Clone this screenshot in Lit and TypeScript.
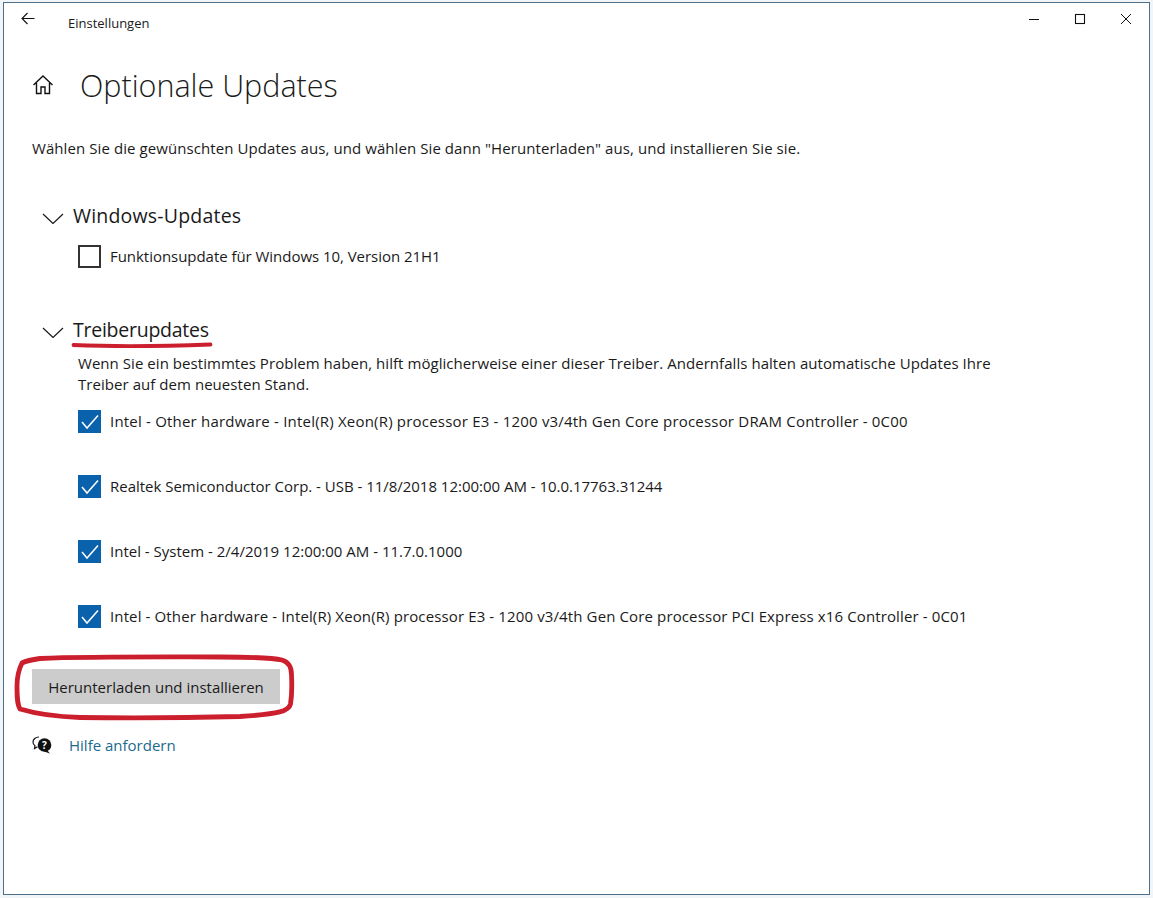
import { LitElement, html, css, svg } from "lit";
import { customElement } from "lit/decorators.js";

const chevron = html`<svg class="chev" width="22" height="12" viewBox="0 0 22 12"><path d="M1 2l10 9.500L21 2" fill="none" stroke="#1a1a1a" stroke-width="1.200"/></svg>`;
const check = html`<svg width="23" height="23" viewBox="0 0 23 23"><path d="M4 12l5 6L20 5.500" fill="none" stroke="#fff" stroke-width="1.500"/></svg>`;

const drivers = [
  { text: "Intel - Other hardware - Intel(R) Xeon(R) processor E3 - 1200 v3/4th Gen Core processor DRAM Controller - 0C00", ls: 0.2 },
  { text: "Realtek Semiconductor Corp. - USB - 11/8/2018 12:00:00 AM - 10.0.17763.31244", ls: -0.02 },
  { text: "Intel - System - 2/4/2019 12:00:00 AM - 11.7.0.1000", ls: 0 },
  { text: "Intel - Other hardware - Intel(R) Xeon(R) processor E3 - 1200 v3/4th Gen Core processor PCI Express x16 Controller - 0C01", ls: 0.124 },
];

@customElement("app-root")
export class AppRoot extends LitElement {
  static styles = css`
    :host {
      display: block;
      width: 1153px;
      height: 898px;
      box-sizing: border-box;
      padding: 2px 3px 3px 3px;
      background: #f2f5f7;
      font-family: "Open Sans", "Noto Sans", sans-serif;
      color: #1a1a1a;
      position: relative;
      overflow: hidden;
    }
    .window {
      height: 100%;
      box-sizing: border-box;
      background: #fff;
      border: 1px solid #4d6f8a;
      display: flex;
      flex-direction: column;
    }
    .titlebar {
      display: flex;
      align-items: flex-start;
      height: 43px;
      flex: none;
    }
    .back { margin: 9px 0 0 17px; width: 14px; height: 13px; display: block; }
    .app { margin: 12px 0 0 33px; font-size: 13px; line-height: 17px; flex: 1; }
    .controls { display: flex; }
    .ctl { width: 46px; height: 32px; display: flex; align-items: center; justify-content: center; }
    .main { padding-left: 28px; display: flex; flex-direction: column; }
    .head { display: flex; align-items: center; height: 44px; margin-top: 17px; }
    .home { display: block; width: 22px; height: 22px; margin-right: 26px; }
    h1 { margin: 0; font-size: 30.500px; font-weight: 300; line-height: 44px; }
    .desc { margin: 31px 0 0; font-size: 15px; line-height: 20px; letter-spacing: 0.08px; }
    .sec { display: flex; align-items: center; height: 28px; margin-left: 10px; }
    .sec .chev { margin-right: 9px; margin-top: 3px; }
    .sec span { font-size: 19.500px; line-height: 28px; }
    .w { letter-spacing: 0.2px; }
    .t { letter-spacing: -0.25px; }
    .s1 { margin-top: 44px; }
    .s2 { margin-top: 48px; }
    .row { display: flex; align-items: center; height: 23px; margin-left: 46px; font-size: 15px; }
    .row .label { margin-bottom: 2px; }
    .box { width: 23px; height: 23px; box-sizing: border-box; margin-right: 9px; flex: none; }
    .box.off { border: 2px solid #333; }
    .box.on { background: #0a62ad; }
    .s1row { margin-top: 15px; letter-spacing: -0.04px; }
    .note { margin: 9px 0 0 46px; width: 930px; font-size: 15px; line-height: 21px; letter-spacing: 0.05px; }
    .list { display: flex; flex-direction: column; gap: 42px; margin-top: 15px; }
    .btn { width: 248px; height: 35px; margin-top: 41px; background: #ccc; font-size: 15px; display: flex; align-items: center; justify-content: center; }
    .help { display: flex; align-items: center; height: 20px; margin-top: 31px; }
    .help svg { display: block; margin-right: 17px; }
    .help a { color: #1b6a8c; font-size: 15px; text-decoration: none; }
    .marks { position: absolute; left: 0; top: 0; pointer-events: none; }
  `;

  render() {
    return html`
      <div class="window">
        <div class="titlebar">
          <svg class="back" viewBox="0 0 14 13"><path d="M13.500 6.500H1M6.500 1L1 6.500 6.500 12" fill="none" stroke="#111" stroke-width="1.100"/></svg>
          <div class="app">Einstellungen</div>
          <div class="controls">
            <div class="ctl"><svg width="12" height="12" viewBox="0 0 12 12"><path d="M1 6.500h10" stroke="#111" stroke-width="1"/></svg></div>
            <div class="ctl"><svg width="12" height="12" viewBox="0 0 12 12"><rect x="1.500" y="1.500" width="9" height="9" fill="none" stroke="#111" stroke-width="1.100"/></svg></div>
            <div class="ctl"><svg width="12" height="12" viewBox="0 0 12 12"><path d="M1 1l10 10M11 1L1 11" stroke="#111" stroke-width="1"/></svg></div>
          </div>
        </div>
        <div class="main">
          <div class="head">
            <svg class="home" viewBox="0 0 22 22"><path d="M1.500 11L11 2l9.500 9M4.500 9v10.500h4.500v-6.500h4v6.500h4.500V9" fill="none" stroke="#111" stroke-width="1.400"/></svg>
            <h1>Optionale Updates</h1>
          </div>
          <p class="desc">Wählen Sie die gewünschten Updates aus, und wählen Sie dann "Herunterladen" aus, und installieren Sie sie.</p>
          <div class="sec s1">${chevron}<span class="w">Windows-Updates</span></div>
          <div class="row s1row"><div class="box off"></div><div class="label">Funktionsupdate für Windows 10, Version 21H1</div></div>
          <div class="sec s2">${chevron}<span class="t">Treiberupdates</span></div>
          <p class="note">Wenn Sie ein bestimmtes Problem haben, hilft möglicherweise einer dieser Treiber. Andernfalls halten automatische Updates Ihre Treiber auf dem neuesten Stand.</p>
          <div class="list">
            ${drivers.map((d) => html`<div class="row" style="letter-spacing:${d.ls}px"><div class="box on">${check}</div><div class="label">${d.text}</div></div>`)}
          </div>
          <div class="btn">Herunterladen und installieren</div>
          <div class="help">
            <svg width="20" height="18" viewBox="0 0 20 18">
              <path d="M7 1C3.500 1 1 3.200 1 6c0 1.600.8 3 2 3.800L2.500 12.500 5.500 10.700" fill="none" stroke="#111" stroke-width="1.200"/>
              <circle cx="12.500" cy="9" r="6.800" fill="#111"/>
              <path d="M15 14l3 3.500-6-2z" fill="#111"/>
              <text x="12.500" y="12.500" font-size="10" font-weight="700" fill="#fff" text-anchor="middle">?</text>
            </svg>
            <a>Hilfe anfordern</a>
          </div>
        </div>
      </div>
      <svg class="marks" width="1153" height="898" viewBox="0 0 1153 898">
        ${svg`<path d="M73.500 345C110 346.500 170 346 210.500 344.500" fill="none" stroke="#cc1f2e" stroke-width="3.800" stroke-linecap="round"/>
        <path d="M40 658.500C90 656.500 160 657 220 657 250 657 272 657.500 282 660 289 662 291.500 667 291.500 675 292 685 292 695 290.500 704 289 711 280 714 240 716.500 180 718 120 718 80 717.500 50 716.500 30 712 20 709 17 704 17 696 17 686 17 676 19 669 22 663 27 660.500 33 659.500 40 658.500Z" fill="none" stroke="#cc1f2e" stroke-width="4.800"/>`}
      </svg>
    `;
  }
}
